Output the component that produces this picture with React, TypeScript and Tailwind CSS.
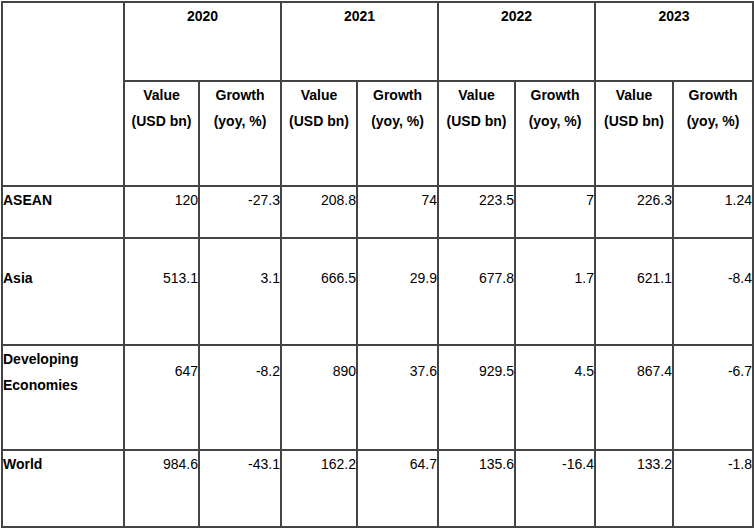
const years = ['2020', '2021', '2022', '2023'];

const rows: { label: string[]; values: string[]; h: string; lp: string; vp: string }[] = [
  { label: ['ASEAN'], values: ['120', '-27.3', '208.8', '74', '223.5', '7', '226.3', '1.24'], h: 'h-[52px]', lp: '', vp: '' },
  { label: ['Asia'], values: ['513.1', '3.1', '666.5', '29.9', '677.8', '1.7', '621.1', '-8.4'], h: 'h-[107px]', lp: 'pt-[26px]', vp: 'pt-[26px]' },
  { label: ['Developing', 'Economies'], values: ['647', '-8.2', '890', '37.6', '929.5', '4.5', '867.4', '-6.7'], h: 'h-[105px]', lp: '', vp: 'pt-[12px]' },
  { label: ['World'], values: ['984.6', '-43.1', '162.2', '64.7', '135.6', '-16.4', '133.2', '-1.8'], h: 'h-[77px]', lp: '', vp: '' },
];

const cell = 'border border-[#444] p-0 align-top';

export default function App() {
  return (
    <div className="bg-white p-px font-['Liberation_Sans',Arial,sans-serif] text-[14px] leading-[26px] text-black">
      <table className="w-[751px] table-fixed border-separate border-spacing-0 border border-[#444]">
        <colgroup>
          <col className="w-[122px]" />
          <col className="w-[75px]" />
          <col className="w-[82px]" />
          <col className="w-[76px]" />
          <col className="w-[81px]" />
          <col className="w-[77px]" />
          <col className="w-[80px]" />
          <col className="w-[78px]" />
          <col className="w-[80px]" />
        </colgroup>
        <thead>
          <tr className="h-[79px]">
            <th rowSpan={2} className={cell}></th>
            {years.map((y) => (
              <th key={y} colSpan={2} className={`${cell} text-center font-bold`}>
                {y}
              </th>
            ))}
          </tr>
          <tr className="h-[105px]">
            {years.map((y) => [
              <th key={y + 'v'} className={`${cell} text-center font-bold`}>
                Value
                <br />
                (USD bn)
              </th>,
              <th key={y + 'g'} className={`${cell} text-center font-bold`}>
                Growth
                <br />
                (yoy, %)
              </th>,
            ])}
          </tr>
        </thead>
        <tbody>
          {rows.map((r) => (
            <tr key={r.label.join(' ')} className={r.h}>
              <td className={`${cell} ${r.lp} text-left font-bold`}>
                {r.label.map((l, i) => (
                  <div key={i}>{l}</div>
                ))}
              </td>
              {r.values.map((v, i) => (
                <td key={i} className={`${cell} ${r.vp} text-right`}>
                  {v}
                </td>
              ))}
            </tr>
          ))}
        </tbody>
      </table>
    </div>
  );
}
